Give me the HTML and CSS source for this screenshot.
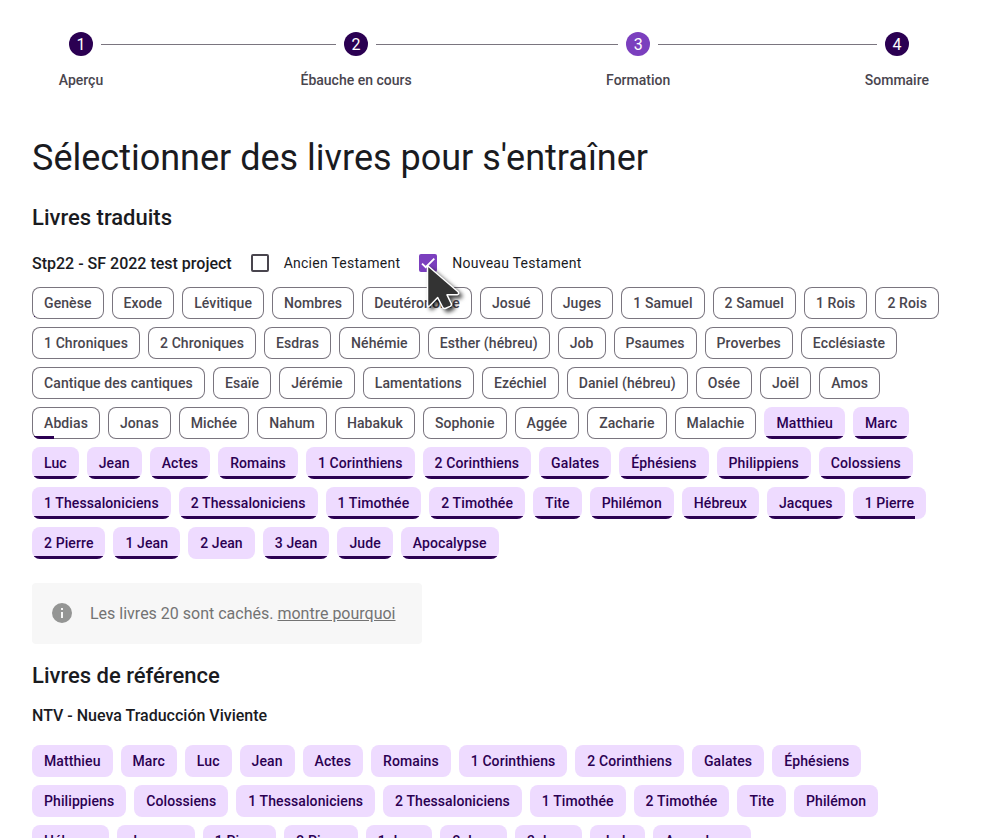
FILE: index.html
```html
<!DOCTYPE html>
<html lang="fr">
<head>
<meta charset="utf-8">
<title>Formation</title>
<link rel="stylesheet" href="styles.css">
</head>
<body>
<nav class="stepper">
  <div class="step first"><div class="track"><i></i><b>1</b><i></i></div><span>Aperçu</span></div>
  <div class="connector"></div>
  <div class="step"><div class="track"><i></i><b>2</b><i></i></div><span>Ébauche en cours</span></div>
  <div class="connector"></div>
  <div class="step current"><div class="track"><i></i><b>3</b><i></i></div><span>Formation</span></div>
  <div class="connector"></div>
  <div class="step last"><div class="track"><i></i><b>4</b><i></i></div><span>Sommaire</span></div>
</nav>
<main>
  <h1>Sélectionner des livres pour s'entraîner</h1>
  <h2>Livres traduits</h2>
  <div class="project">
    <h3>Stp22 - SF 2022 test project</h3>
    <label class="check"><span class="box"></span>Ancien Testament</label>
    <label class="check"><span class="box checked"><svg viewBox="0 0 24 24"><path d="M1.73,12.91 8.1,19.28 22.79,4.59"/></svg>
      <svg class="cursor" viewBox="0 0 46 56"><path d="M4.5 4.5V44.5Q5 46.2 7 44.5L14.7 36.5L19.5 46Q20.6 48.2 22.8 47.2L27.2 45.4Q29 44.3 28.2 42.3L24 33.8H34.2Q36.8 33 35 30.8Z"/></svg></span>Nouveau Testament</label>
  </div>
  <div class="chips" id="translated"></div>
  <div class="notice">
    <svg viewBox="0 0 24 24"><path d="M12 2a10 10 0 1 0 0 20 10 10 0 0 0 0-20zm1 15h-2v-6h2zm0-8h-2V7h2z"/></svg>
    <p>Les livres 20 sont cachés. <a>montre pourquoi</a></p>
  </div>
  <h2>Livres de référence</h2>
  <h3>NTV - Nueva Traducción Viviente</h3>
  <div class="chips" id="reference"></div>
</main>
<script src="books.js"></script>
</body>
</html>
```
FILE: books.js
```js
const oldTestament = ["Genèse", "Exode", "Lévitique", "Nombres", "Deutéronome", "Josué", "Juges", "1 Samuel", "2 Samuel", "1 Rois", "2 Rois", "1 Chroniques", "2 Chroniques", "Esdras", "Néhémie", "Esther (hébreu)", "Job", "Psaumes", "Proverbes", "Ecclésiaste", "Cantique des cantiques", "Esaïe", "Jérémie", "Lamentations", "Ezéchiel", "Daniel (hébreu)", "Osée", "Joël", "Amos", "Abdias", "Jonas", "Michée", "Nahum", "Habakuk", "Sophonie", "Aggée", "Zacharie", "Malachie"];
const newTestament = ["Matthieu", "Marc", "Luc", "Jean", "Actes", "Romains", "1 Corinthiens", "2 Corinthiens", "Galates", "Éphésiens", "Philippiens", "Colossiens", "1 Thessaloniciens", "2 Thessaloniciens", "1 Timothée", "2 Timothée", "Tite", "Philémon", "Hébreux", "Jacques", "1 Pierre", "2 Pierre", "1 Jean", "2 Jean", "3 Jean", "Jude", "Apocalypse"];
const progress = { "Genèse": 4, "Abdias": 33, "1 Pierre": 85, "2 Jean": 0 };

function addChip(parent, name, selected, percent) {
  const chip = document.createElement("div");
  chip.className = selected ? "chip selected" : "chip";
  chip.textContent = name;
  if (percent) {
    const bar = document.createElement("div");
    bar.className = "bar";
    bar.style.width = percent + "%";
    chip.append(bar);
  }
  parent.append(chip);
}

const translated = document.getElementById("translated");
const reference = document.getElementById("reference");
oldTestament.forEach(n => addChip(translated, n, false, progress[n] ?? 0));
newTestament.forEach(n => {
  addChip(translated, n, true, progress[n] ?? 100);
  addChip(reference, n, true, 0);
});
```
FILE: styles.css
```css
* { box-sizing: border-box; }
html { overflow: hidden; }
body { margin: 0; padding: 32px 32px 0; height: 838px; overflow: hidden; background: #fff; color: #1a1b1f; font-family: Roboto, sans-serif; }
h1, h2, h3, p { margin: 0; }

.stepper { display: flex; }
.step span { display: block; min-width: 98px; padding: 0 24px; margin-top: 14px; font-size: 14px; line-height: 20px; font-weight: 500; text-align: center; color: #49454e; }
.track { display: flex; align-items: center; gap: 8px; }
.track i { flex: 1; height: 1px; background: #7a757f; }
.track b { width: 24px; height: 24px; border-radius: 50%; background: #2b0052; color: #fff; font-size: 16px; font-weight: 400; line-height: 25px; text-align: center; }
.current b { background: #7b3fbe; }
.first i:first-child, .last i:last-child { background: none; }
.connector { flex: 1; height: 1px; margin-top: 12px; background: #7a757f; }

h1 { margin-top: 46px; font-size: 36px; line-height: 44px; font-weight: 400; }
h2 { margin-top: 24px; font-size: 22px; line-height: 28px; font-weight: 500; }
h3 { font-size: 16px; line-height: 24px; font-weight: 500; }

.project { display: flex; align-items: center; height: 40px; margin-top: 11px; }
.project h3 { padding-top: 1px; }
.check { display: flex; align-items: center; margin-left: 19px; font-size: 14px; line-height: 20px; letter-spacing: 0.256px; }
.box { position: relative; width: 18px; height: 18px; margin-right: 15px; border: 2px solid #49454e; border-radius: 2px; }
.box.checked { border-color: #7b3fbe; background: #7b3fbe; }
.box svg { display: block; width: 14px; height: 14px; fill: none; stroke: #fff; stroke-width: 3.12; }
.box .cursor { position: absolute; left: 2px; top: 5px; width: 46px; height: 56px; z-index: 2; fill: #333; stroke-width: 1.5; stroke-linejoin: round; filter: drop-shadow(3px 3px 2px rgba(0, 0, 0, 0.75)); }

.chips { display: flex; flex-wrap: wrap; gap: 8px; margin-top: 4px; }
.chip { position: relative; height: 32px; padding: 0 12px; border-radius: 8px; overflow: hidden; font-size: 14px; line-height: 32px; font-weight: 500; letter-spacing: 0.096px; white-space: nowrap; color: #49454e; box-shadow: inset 0 0 0 1px #7a757f; }
.chip.selected { background: #eedbff; color: #2b0052; box-shadow: none; }
.bar { position: absolute; left: 0; bottom: 0; height: 3px; background: #2b0052; }

.notice { display: flex; align-items: center; gap: 16px; width: 390px; height: 61px; margin-top: 24px; padding-left: 18px; border-radius: 4px; background: #f7f7f7; color: #737373; font-size: 16px; line-height: 24px; }
.notice svg { width: 24px; height: 24px; margin-top: -1px; fill: #949594; }
.notice a { text-decoration: underline; }
.notice + h2 { margin-top: 18px; }
h2 + h3 { margin-top: 14px; }
#reference { margin-top: 17px; }
```
